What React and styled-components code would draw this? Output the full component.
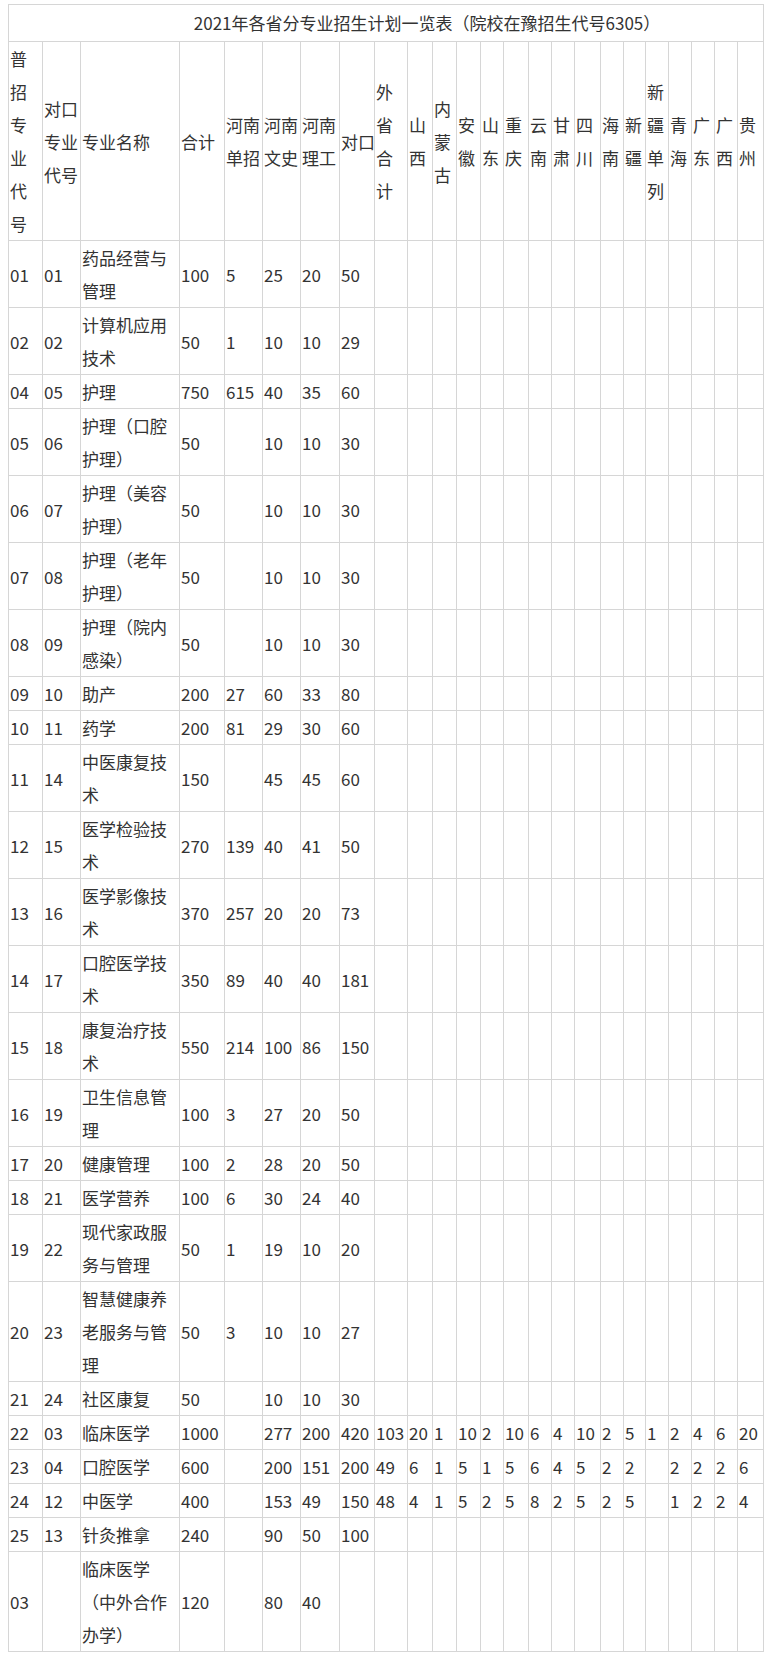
import React from 'react'
import styled, { createGlobalStyle } from 'styled-components'

const GlobalStyle = createGlobalStyle`
    body {
        margin: 4px 8px 0;
        background: #fff;
        font-family: 'Noto Sans CJK SC', 'Noto Sans', sans-serif;
        color: #333;
    }
`

const PlanTable = styled.table`
    width: 755px;
    table-layout: fixed;
    border-collapse: collapse;
    font-size: 17px;
    line-height: 33px;
`

const Cell = styled.td`
    border: 1px solid #d6d6d6;
    padding: 0 0 0 1px;
    vertical-align: middle;
    text-align: left;
    word-break: break-all;
    overflow: visible;
`

const TitleCell = styled(Cell)`
    text-align: center;
    line-height: 36px;
    padding-left: 82px;
    white-space: nowrap;
`

const HeadCell = styled(Cell)`
    white-space: nowrap;
`

const NameCell = styled(Cell)`
    word-break: normal;
    line-break: strict;
`

const widths = [34, 38, 99, 45, 38, 38, 39, 35, 33, 25, 24, 24, 23, 25, 23, 23, 26, 23, 22, 23, 23, 23, 23, 26]

const heads = [
    '普招专业代号'.split(''),
    ['对口', '专业', '代号'],
    ['专业名称'],
    ['合计'],
    ['河南', '单招'],
    ['河南', '文史'],
    ['河南', '理工'],
    ['对口'],
    '外省合计'.split(''),
    '山西'.split(''),
    '内蒙古'.split(''),
    '安徽'.split(''),
    '山东'.split(''),
    '重庆'.split(''),
    '云南'.split(''),
    '甘肃'.split(''),
    '四川'.split(''),
    '海南'.split(''),
    '新疆'.split(''),
    '新疆单列'.split(''),
    '青海'.split(''),
    '广东'.split(''),
    '广西'.split(''),
    '贵州'.split(''),
]

const rows = [
    ['01', '01', '药品经营与管理', '100', '5', '25', '20', '50'],
    ['02', '02', '计算机应用技术', '50', '1', '10', '10', '29'],
    ['04', '05', '护理', '750', '615', '40', '35', '60'],
    ['05', '06', '护理（口腔护理）', '50', '', '10', '10', '30'],
    ['06', '07', '护理（美容护理）', '50', '', '10', '10', '30'],
    ['07', '08', '护理（老年护理）', '50', '', '10', '10', '30'],
    ['08', '09', '护理（院内感染）', '50', '', '10', '10', '30'],
    ['09', '10', '助产', '200', '27', '60', '33', '80'],
    ['10', '11', '药学', '200', '81', '29', '30', '60'],
    ['11', '14', '中医康复技术', '150', '', '45', '45', '60'],
    ['12', '15', '医学检验技术', '270', '139', '40', '41', '50'],
    ['13', '16', '医学影像技术', '370', '257', '20', '20', '73'],
    ['14', '17', '口腔医学技术', '350', '89', '40', '40', '181'],
    ['15', '18', '康复治疗技术', '550', '214', '100', '86', '150'],
    ['16', '19', '卫生信息管理', '100', '3', '27', '20', '50'],
    ['17', '20', '健康管理', '100', '2', '28', '20', '50'],
    ['18', '21', '医学营养', '100', '6', '30', '24', '40'],
    ['19', '22', '现代家政服务与管理', '50', '1', '19', '10', '20'],
    ['20', '23', '智慧健康养老服务与管理', '50', '3', '10', '10', '27'],
    ['21', '24', '社区康复', '50', '', '10', '10', '30'],
    ['22', '03', '临床医学', '1000', '', '277', '200', '420',
        '103', '20', '1', '10', '2', '10', '6', '4', '10', '2', '5', '1', '2', '4', '6', '20'],
    ['23', '04', '口腔医学', '600', '', '200', '151', '200',
        '49', '6', '1', '5', '1', '5', '6', '4', '5', '2', '2', '', '2', '2', '2', '6'],
    ['24', '12', '中医学', '400', '', '153', '49', '150',
        '48', '4', '1', '5', '2', '5', '8', '2', '5', '2', '5', '', '1', '2', '2', '4'],
    ['25', '13', '针灸推拿', '240', '', '90', '50', '100'],
    ['03', '', '临床医学（中外合作办学）', '120', '', '80', '40', ''],
]

const fill = r => widths.map((w, i) => r[i] || '')

export default function App() {
    return (
        <>
            <GlobalStyle />
            <PlanTable>
                <colgroup>
                    {widths.map((w, i) => <col key={i} style={{ width: w }} />)}
                </colgroup>
                <tbody>
                    <tr>
                        <TitleCell colSpan={widths.length}>
                            2021年各省分专业招生计划一览表（院校在豫招生代号6305）
                        </TitleCell>
                    </tr>
                    <tr>
                        {heads.map((h, i) =>
                            <HeadCell key={i}>
                                {h.map((line, j) =>
                                    <React.Fragment key={j}>
                                        {j > 0 && <br />}
                                        {line}
                                    </React.Fragment>
                                )}
                            </HeadCell>
                        )}
                    </tr>
                    {rows.map((r, k) =>
                        <tr key={k}>
                            {fill(r).map((v, i) =>
                                i === 2
                                    ? <NameCell key={i}>{v}</NameCell>
                                    : <Cell key={i}>{v}</Cell>
                            )}
                        </tr>
                    )}
                </tbody>
            </PlanTable>
        </>
    )
}
